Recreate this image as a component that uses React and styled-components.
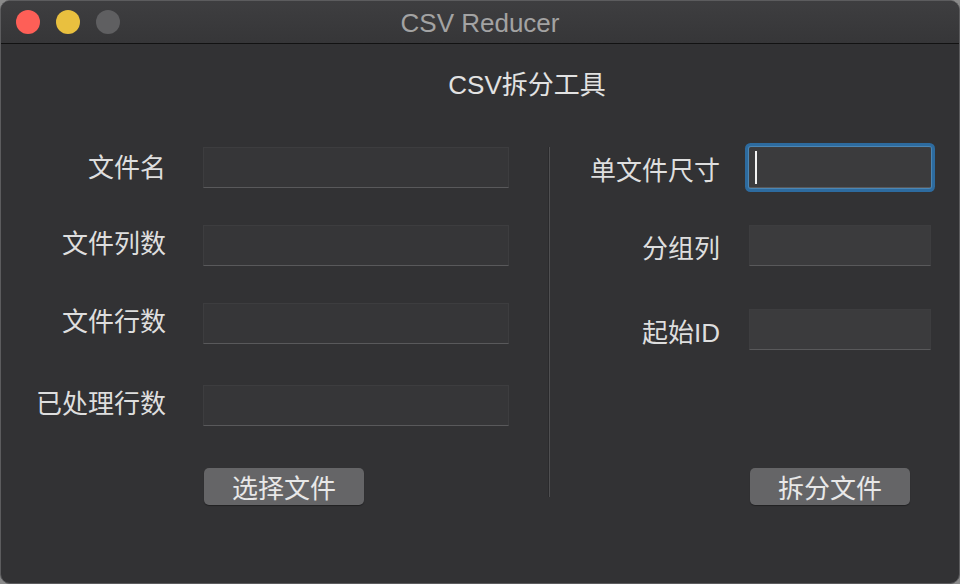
import styled, { createGlobalStyle } from "styled-components";

const leftRows = [
  { label: "文件名", offset: 0, dy: 0 },
  { label: "文件列数", offset: 0, dy: -2 },
  { label: "文件行数", offset: 0, dy: -2 },
  { label: "已处理行数", offset: 4, dy: -2 },
];

const rightRows = [
  { label: "单文件尺寸", offset: 0, dy: 3, focused: true },
  { label: "分组列", offset: 0, dy: 3 },
  { label: "起始ID", offset: 6, dy: 3 },
];

const lights = ["#fe5f57", "#e9c03f", "#5f5f61"];

export default function App() {
  return (
    <>
      <GlobalStyle />
      <Window>
        <TitleBar>
          <Lights>
            {lights.map((c) => (
              <Light key={c} color={c} />
            ))}
          </Lights>
          <Title>CSV Reducer</Title>
          <span />
        </TitleBar>
        <Body>
          <Heading>CSV拆分工具</Heading>
          <Columns>
            <Panel $width={547} $pad={29}>
              <Form>
                {leftRows.map((r) => (
                  <Row key={r.label} $offset={r.offset} $gap={37}>
                    <Label $width={136} $dy={r.dy}>
                      {r.label}
                    </Label>
                    <Field $width={306} />
                  </Row>
                ))}
              </Form>
              <Button $indent={174}>选择文件</Button>
            </Panel>
            <Divider />
            <Panel $width={409} $pad={30}>
              <Form>
                {rightRows.map((r) => (
                  <Row key={r.label} $offset={r.offset} $gap={29}>
                    <Label $width={140} $dy={r.dy}>
                      {r.label}
                    </Label>
                    <Field $width={182} $light $focused={r.focused}>
                      {r.focused && <Caret />}
                    </Field>
                  </Row>
                ))}
              </Form>
              <Button $indent={170}>拆分文件</Button>
            </Panel>
          </Columns>
        </Body>
      </Window>
    </>
  );
}

const GlobalStyle = createGlobalStyle`
  html, body {
    margin: 0;
    padding: 0;
    background: #8a8a8a;
  }
  * {
    box-sizing: border-box;
  }
`;

const Window = styled.div`
  width: 960px;
  height: 584px;
  border: 1px solid #5c5c5e;
  border-radius: 10px;
  overflow: hidden;
  background: #323234;
  display: flex;
  flex-direction: column;
  font-family: "Liberation Sans", "Noto Sans CJK SC", sans-serif;
`;

const TitleBar = styled.div`
  height: 43px;
  flex-shrink: 0;
  display: grid;
  grid-template-columns: 1fr auto 1fr;
  align-items: center;
  background: linear-gradient(#3e3e40, #363638);
  border-bottom: 1px solid #121212;
`;

const Lights = styled.div`
  display: flex;
  gap: 16px;
  padding-left: 15px;
  padding-bottom: 1px;
`;

const Light = styled.span`
  width: 24px;
  height: 24px;
  border-radius: 50%;
  background: ${({ color }) => color};
`;

const Title = styled.div`
  font-size: 26px;
  line-height: 30px;
  padding-top: 2px;
  color: #a3a3a3;
`;

const Body = styled.div`
  flex: 1;
  padding-top: 26px;
`;

const Heading = styled.div`
  padding-left: 94px;
  text-align: center;
  font-size: 26px;
  line-height: 30px;
  color: #e2e2e2;
`;

const Columns = styled.div`
  display: flex;
  margin-top: 47px;
`;

const Panel = styled.div`
  width: ${({ $width }) => $width}px;
  height: 358px;
  padding-left: ${({ $pad }) => $pad}px;
  display: flex;
  flex-direction: column;
`;

const Form = styled.div`
  display: flex;
  flex-direction: column;
  gap: 37px;
`;

const Row = styled.div`
  display: flex;
  align-items: center;
  gap: ${({ $gap }) => $gap}px;
  margin-top: ${({ $offset }) => $offset}px;
`;

const Label = styled.div`
  width: ${({ $width }) => $width}px;
  text-align: right;
  font-size: 26px;
  line-height: 30px;
  color: #dedede;
  white-space: nowrap;
  transform: translateY(${({ $dy }) => $dy}px);
`;

const Field = styled.div`
  width: ${({ $width }) => $width}px;
  height: 41px;
  display: flex;
  align-items: center;
  padding-left: 5px;
  background: ${({ $light }) => ($light ? "#3b3b3d" : "#363638")};
  border: 1px solid #3d3d3f;
  border-bottom-color: #59595b;
  border-radius: ${({ $focused }) => ($focused ? "2px" : "0")};
  box-shadow: ${({ $focused }) =>
    $focused ? "0 0 0 1px #4b86b4, 0 0 0 4px #2d6b9f" : "none"};
`;

const Caret = styled.span`
  width: 2px;
  height: 33px;
  background: #f2f2f2;
`;

const Divider = styled.div`
  width: 2px;
  height: 350px;
  border-left: 1px solid #2a2a2c;
  border-right: 1px solid #4f4f51;
`;

const Button = styled.div`
  margin-top: auto;
  margin-left: ${({ $indent }) => $indent}px;
  width: 160px;
  height: 37px;
  display: flex;
  align-items: center;
  justify-content: center;
  background: #656567;
  border-radius: 5px;
  box-shadow: 0 1px 1px rgba(0, 0, 0, 0.35);
  font-size: 26px;
  color: #e8e8e8;
`;
